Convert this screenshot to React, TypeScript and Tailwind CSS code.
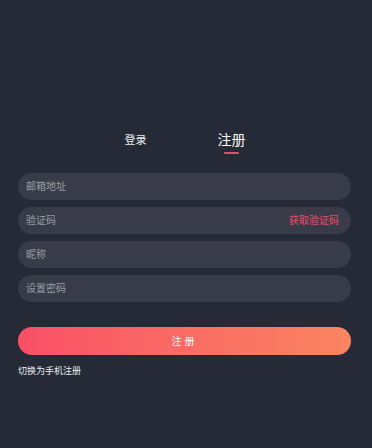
import { useState } from "react";

const fields = [
  { key: "email", placeholder: "邮箱地址" },
  { key: "code", placeholder: "验证码", action: "获取验证码" },
  { key: "nick", placeholder: "昵称" },
  { key: "pwd", placeholder: "设置密码", type: "password" },
];

export default function App() {
  const [tab, setTab] = useState("register");

  return (
    <div
      className="min-h-[448px] w-full bg-[#262a37] pl-[18px] pr-[21px] pt-[130px]"
      style={{ fontFamily: '"Noto Sans", "Noto Sans CJK SC", sans-serif' }}
    >
      <div className="flex justify-center pr-[2px]">
        <button
          onClick={() => setTab("login")}
          className={`flex h-[26px] w-24 flex-col items-center leading-[20px] text-[#eceef2] ${tab === "login" ? "text-[14px]" : "text-[11px]"}`}
        >
          登录
        </button>
        <button
          onClick={() => setTab("register")}
          className="flex h-[26px] w-24 flex-col items-center text-[14px] leading-[20px] text-white"
        >
          注册
          <span className="mt-[2px] h-[2px] w-[15px] rounded-full bg-[#e0506a]" />
        </button>
      </div>

      <div className="mt-[17px] flex flex-col gap-[7px]">
        {fields.map((f) => (
          <div
            key={f.key}
            className="flex h-[27px] items-center rounded-full bg-[#393c48] pl-[8px] pr-[12px]"
          >
            <input
              type={f.type ?? "text"}
              placeholder={f.placeholder}
              className="min-w-0 flex-1 bg-transparent text-[10px] text-white outline-none placeholder:text-[#9b9da5]"
            />
            {f.action && (
              <span className="text-[10px] text-[#e2506a]">{f.action}</span>
            )}
          </div>
        ))}
      </div>

      <button className="mt-[25px] flex h-[28px] w-full items-center justify-center rounded-full bg-gradient-to-r from-[#f94f66] to-[#fa8462] text-[10px] tracking-[0.3em] text-white">
        注册
      </button>

      <div className="mt-[9px] text-[9px] text-[#eceef2]">
        切换为手机注册
      </div>
    </div>
  );
}
